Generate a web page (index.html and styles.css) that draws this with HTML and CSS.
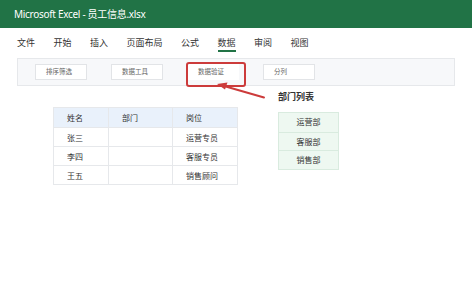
FILE: index.html
```html
<!DOCTYPE html>
<html lang="zh">
<head>
<meta charset="utf-8">
<title>Microsoft Excel - 员工信息.xlsx</title>
<link rel="stylesheet" href="styles.css">
</head>
<body>
<div class="app">
  <header class="titlebar">Microsoft Excel - 员工信息.xlsx</header>
  <nav class="tabs">
    <span class="tab">文件</span>
    <span class="tab">开始</span>
    <span class="tab">插入</span>
    <span class="tab">页面布局</span>
    <span class="tab">公式</span>
    <span class="tab active">数据</span>
    <span class="tab">审阅</span>
    <span class="tab">视图</span>
  </nav>
  <div class="ribbon">
    <div class="btn">排序筛选</div>
    <div class="btn">数据工具</div>
    <div class="btn highlighted">数据验证</div>
    <div class="btn">分列</div>
  </div>
  <main class="content">
    <table class="sheet">
      <thead>
        <tr><th class="c1">姓名</th><th class="c2">部门</th><th class="c3">岗位</th></tr>
      </thead>
      <tbody>
        <tr><td>张三</td><td></td><td>运营专员</td></tr>
        <tr><td>李四</td><td></td><td>客服专员</td></tr>
        <tr><td>王五</td><td></td><td>销售顾问</td></tr>
      </tbody>
    </table>
    <section class="dept">
      <div class="dept-label">部门列表</div>
      <ul class="dept-list">
        <li>运营部</li>
        <li>客服部</li>
        <li>销售部</li>
      </ul>
    </section>
  </main>
  <svg class="arrow" width="472" height="288" viewBox="0 0 472 288">
    <line x1="264" y1="97.5" x2="224" y2="86" stroke="#cc3b3b" stroke-width="2" stroke-linecap="round"/>
    <polygon points="217,84 227.5,82.5 225,89.5" fill="#cc3b3b"/>
  </svg>
</div>
</body>
</html>
```

FILE: styles.css
```css
* { box-sizing: border-box; }
html, body { margin: 0; padding: 0; }
body {
  width: 472px;
  height: 288px;
  background: #ffffff;
  font-family: "Noto Sans", "Noto Sans CJK SC", sans-serif;
  color: #333333;
  overflow: hidden;
}
.app { position: relative; width: 472px; height: 288px; }

.titlebar {
  height: 28px;
  background: #217346;
  color: #ffffff;
  font-size: 10px;
  line-height: 28px;
  padding-left: 14px;
  letter-spacing: -0.3px;
}

.tabs {
  display: flex;
  gap: 18.5px;
  padding-left: 17px;
  height: 30px;
  align-items: flex-start;
  padding-top: 9px;
}
.tab {
  font-size: 9px;
  line-height: 12px;
  color: #333333;
  padding-bottom: 1px;
  border-bottom: 2px solid transparent;
}
.tab.active {
  color: #3a3a3a;
  border-bottom-color: #217346;
}

.ribbon {
  margin-left: 17px;
  width: 438px;
  height: 28px;
  background: #f7f8fa;
  border: 1px solid #e6e8eb;
  display: flex;
  align-items: center;
  padding-left: 17px;
  gap: 24px;
}
.btn {
  position: relative;
  width: 52px;
  height: 16px;
  background: #ffffff;
  border: 1px solid #e2e4e7;
  font-size: 6.5px;
  line-height: 14px;
  color: #666666;
  padding-left: 10px;
}
.btn.highlighted {
  border-color: transparent;
}
.btn.highlighted::after {
  content: "";
  position: absolute;
  left: -2px;
  top: -3px;
  width: 56px;
  height: 21px;
  border: 2px solid #cc3b3b;
  border-radius: 3px;
}

.content {
  display: flex;
  align-items: flex-start;
  padding-left: 53px;
  gap: 40px;
}

.sheet {
  margin-top: 21px;
  border-collapse: collapse;
  font-size: 8px;
  color: #333333;
}
.sheet th, .sheet td {
  border: 1px solid #e6e8eb;
  text-align: left;
  padding: 0 0 0 13px;
  font-weight: normal;
}
.sheet th {
  height: 20px;
  background: #e9f1fb;
}
.sheet td { height: 19px; }
.c1 { width: 55px; }
.c2 { width: 64px; }
.c3 { width: 65px; }

.dept { margin-top: 5px; }
.dept-label {
  font-size: 9px;
  line-height: 12px;
  font-weight: bold;
  color: #333333;
  margin-bottom: 9px;
}
.dept-list {
  list-style: none;
  margin: 0;
  padding: 0;
  width: 61px;
  border: 1px solid #d9ebdf;
  background: #eef8f1;
}
.dept-list li {
  height: 18.5px;
  line-height: 18px;
  text-align: center;
  font-size: 8px;
  color: #333333;
  border-top: 1px solid #d9ebdf;
}
.dept-list li:first-child { border-top: none; }

.arrow {
  position: absolute;
  left: 0;
  top: 0;
  pointer-events: none;
}
```
